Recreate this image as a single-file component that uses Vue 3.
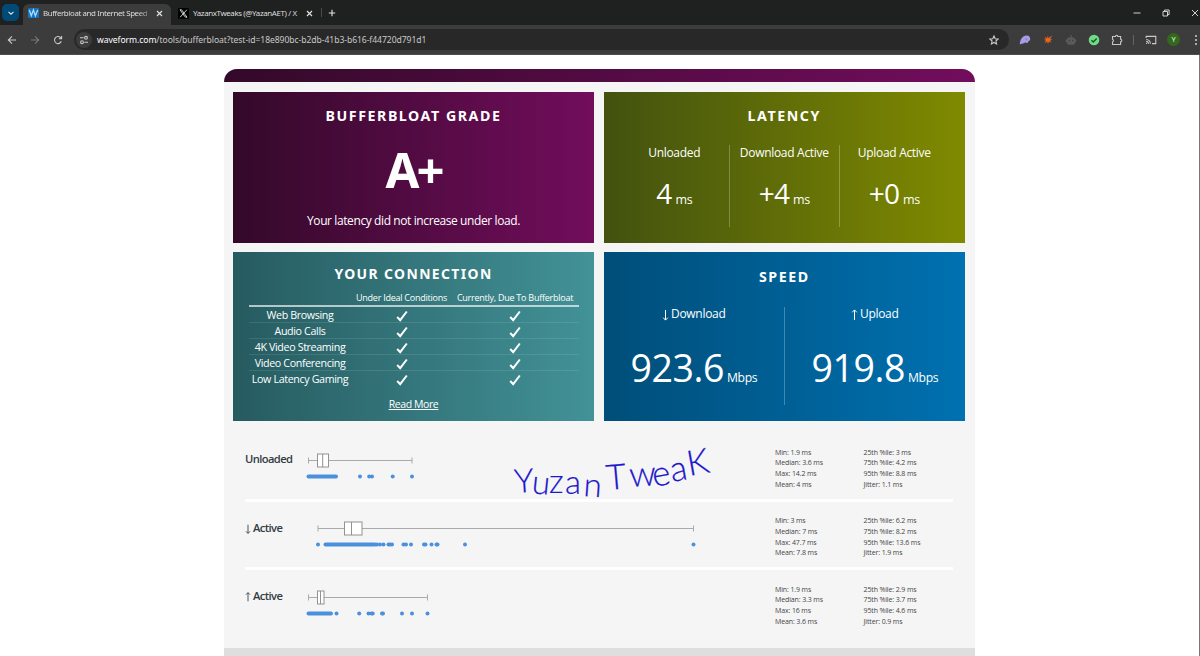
<script setup>
const tabs = [
  { title: 'Bufferbloat and Internet Speed', kind: 'wave', active: true },
  { title: 'YazanxTweaks (@YazanAET) / X', kind: 'x', active: false },
];

const latency = [
  { label: 'Unloaded', value: '4' },
  { label: 'Download Active', value: '+4' },
  { label: 'Upload Active', value: '+0' },
];

const speed = [
  { label: 'Download', dir: 'down', value: '923.6' },
  { label: 'Upload', dir: 'up', value: '919.8' },
];

const uses = ['Web Browsing', 'Audio Calls', '4K Video Streaming', 'Video Conferencing', 'Low Latency Gaming'];

// low/high are the whiskers, solid is the run where the samples overlap
const rows = [
  {
    label: 'Unloaded', dir: '',
    low: 8.5, q1: 17.5, med: 22.7, q3: 28.5, high: 112,
    solid: [8.5, 36], dots: [60, 69.2, 72, 92.7, 112],
    left: ['Min: 1.9 ms', 'Median: 3.6 ms', 'Max: 14.2 ms', 'Mean: 4 ms'],
    right: ['25th %ile: 3 ms', '75th %ile: 4.2 ms', '95th %ile: 8.8 ms', 'Jitter: 1.1 ms'],
  },
  {
    label: 'Active', dir: 'down',
    low: 18, q1: 44.5, med: 51.5, q3: 62, high: 393.5,
    solid: [25.5, 75], dots: [18, 77, 80, 83.5, 88.5, 90, 92, 103.5, 106, 111, 124, 125.5, 131.5, 136.5, 137.5, 165, 393.5],
    left: ['Min: 3 ms', 'Median: 7 ms', 'Max: 47.7 ms', 'Mean: 7.8 ms'],
    right: ['25th %ile: 6.2 ms', '75th %ile: 8.2 ms', '95th %ile: 13.6 ms', 'Jitter: 1.9 ms'],
  },
  {
    label: 'Active', dir: 'up',
    low: 8.5, q1: 17.5, med: 20.5, q3: 24, high: 127.5,
    solid: [8.5, 31], dots: [36.5, 59.2, 68.5, 71.5, 72.7, 82, 83, 102, 112, 127.5],
    left: ['Min: 1.9 ms', 'Median: 3.3 ms', 'Max: 16 ms', 'Mean: 3.6 ms'],
    right: ['25th %ile: 2.9 ms', '75th %ile: 3.7 ms', '95th %ile: 4.6 ms', 'Jitter: 0.9 ms'],
  },
];
</script>

<template>
  <div class="browser">
    <header class="tabstrip">
      <button class="tab-search">
        <svg width="8" height="8" viewBox="0 0 8 8"><path d="M1.5 2.8 4 5.2 6.5 2.8" /></svg>
      </button>
      <div v-for="tab in tabs" :key="tab.title" class="tab" :class="{ active: tab.active }">
        <svg v-if="tab.kind === 'wave'" class="favicon" width="11" height="10" viewBox="0 0 11 10">
          <rect width="11" height="10" rx="1" fill="#1673bd" />
          <path d="M1.3 2 3.3 7.8 5.4 2 7.4 7.8 9.7 2" fill="none" stroke="#a7dcff" stroke-width="1.3" />
        </svg>
        <svg v-else class="favicon" width="11" height="11" viewBox="0 0 11 11">
          <rect width="11" height="11" rx="1" fill="#000" />
          <path d="M2 1.8h1.6L9 9.2H7.4ZM8.8 1.8 2.2 9.2" fill="none" stroke="#ddd" stroke-width=".9" />
        </svg>
        <span class="tab-title">{{ tab.title }}</span>
        <svg class="close" width="7" height="7" viewBox="0 0 7 7"><path d="m1 1 5 5M6 1 1 6" /></svg>
      </div>
      <span class="tab-divider"></span>
      <svg class="plus" width="8" height="8" viewBox="0 0 8 8"><path d="M4 .8v6.4M.8 4h6.4" /></svg>
      <div class="window-buttons">
        <svg width="8" height="8" viewBox="0 0 8 8"><path d="M.5 4h7" /></svg>
        <svg width="8" height="8" viewBox="0 0 8 8"><path d="M1 2.5h4.5V7H1ZM2.5 2.3V1h4.6v4.6H5.7" /></svg>
        <svg width="8" height="8" viewBox="0 0 8 8"><path d="m1 1 6 6M7 1 1 7" /></svg>
      </div>
    </header>

    <div class="toolbar">
      <svg class="nav" width="10" height="10" viewBox="0 0 10 10"><path d="M9 5H1.5M5 1.3 1.3 5 5 8.7" /></svg>
      <svg class="nav dim" width="10" height="10" viewBox="0 0 10 10"><path d="M1 5h7.5M5 1.3 8.7 5 5 8.7" /></svg>
      <svg class="nav" width="10" height="10" viewBox="0 0 10 10"><path d="M8.3 6.3A3.5 3.5 0 1 1 7.6 2.7L8.5 3.6M8.6 1v2.8H5.8" /></svg>
      <div class="omnibox">
        <span class="site-info">
          <svg width="10" height="10" viewBox="0 0 10 10">
            <path d="M1 2.8h3.6M5.4 7.2H9" />
            <circle cx="7" cy="2.8" r="1.4" />
            <circle cx="3" cy="7.2" r="1.4" />
          </svg>
        </span>
        <span class="url"><b>waveform.com</b>/tools/bufferbloat?test-id=18e890bc-b2db-41b3-b616-f44720d791d1</span>
        <svg class="star" width="10" height="10" viewBox="0 0 10 10"><path d="m5 .9 1.2 2.8 3 .3-2.3 2 .7 3L5 7.5 2.4 9l.7-3L.8 4l3-.3Z" /></svg>
      </div>
      <div class="extensions">
        <svg width="12" height="12" viewBox="0 0 12 12">
          <path d="M.8 10.4C1 5.5 3.4 1.9 7.6 1.5c2.4-.1 3.9 1.8 3.6 4.1-.2 1.4-1.6.9-2 2.1-.4 1.4-1.7 1.6-2.9.6-.9 1.6-3.1 1-5.5 2.1Z" fill="#a99be8" />
          <path d="M6.6 4.5c0 1 1 1.4 1.8.8" fill="none" stroke="#6757ad" stroke-width=".7" />
        </svg>
        <svg width="12" height="12" viewBox="0 0 12 12">
          <path d="m6 1.2.4 3.1 4-3-2.3 3.6 2.5.9-2.5.6 1.3 2.4-2.5-1.2L6 10.6l-.7-3-2.7 1.6 1.4-2.8L1.4 6l2.5-.7-1.3-2.5 2.5 1.5Z" fill="#ed6518" />
        </svg>
        <svg width="12" height="12" viewBox="0 0 12 12">
          <path d="M5.4 1h1.2v2.4h1.6q1.8 0 1.8 2.1h1.2v2.8H10q0 2.5-2 2.5H4q-2 0-2-2.5H.8V5.5H2q0-2.1 1.8-2.1h1.6Z" fill="#5a5a5a" />
          <circle cx="4.3" cy="6.5" r=".7" fill="#3c3c3c" /><circle cx="7.7" cy="6.5" r=".7" fill="#3c3c3c" />
        </svg>
        <svg width="12" height="12" viewBox="0 0 12 12">
          <circle cx="6" cy="6" r="5.3" fill="#6fdc85" />
          <path d="m3.4 6.2 1.9 1.8 3.4-3.6" fill="none" stroke="#1d5730" stroke-width="1.5" />
        </svg>
        <svg width="12" height="12" viewBox="0 0 12 12">
          <path d="M1.5 2.5h3a1.2 1.2 0 0 1 2.4 0H9.6v2.8a1.2 1.2 0 0 1 0 2.4v2.8H1.5V8a1.5 1.5 0 0 0 0-2.8Z" fill="none" stroke="#c7c7c7" stroke-width="1.1" />
        </svg>
      </div>
      <span class="bar-divider"></span>
      <svg class="cast" width="12" height="12" viewBox="0 0 12 12">
        <path d="M1.2 4V2.4h9.6v7.2H7M1.2 5.5a4.3 4.3 0 0 1 4.2 4.2M1.2 7.4a2.4 2.4 0 0 1 2.3 2.3" />
        <circle cx="1.6" cy="9.3" r=".6" />
      </svg>
      <span class="avatar">Y</span>
      <svg class="menu" width="4" height="12" viewBox="0 0 4 12">
        <circle cx="2" cy="2" r="1" /><circle cx="2" cy="6" r="1" /><circle cx="2" cy="10" r="1" />
      </svg>
    </div>

    <main class="page">
      <div class="report">
        <div class="report-top"></div>
        <div class="cards">
          <section class="card grade">
            <h2>BUFFERBLOAT GRADE</h2>
            <strong>A+</strong>
            <p>Your latency did not increase under load.</p>
          </section>

          <section class="card latency">
            <h2>LATENCY</h2>
            <div class="metrics">
              <div v-for="m in latency" :key="m.label" class="metric">
                <span class="metric-label">{{ m.label }}</span>
                <div class="reading"><span class="num">{{ m.value }}</span><span class="unit">ms</span></div>
              </div>
            </div>
          </section>

          <section class="card connection">
            <h2>YOUR CONNECTION</h2>
            <div class="table">
              <div class="tr head">
                <span></span>
                <span class="ideal">Under Ideal Conditions</span>
                <span class="current">Currently, Due To Bufferbloat</span>
              </div>
              <div v-for="use in uses" :key="use" class="tr">
                <span class="use">{{ use }}</span>
                <span v-for="n in 2" :key="n" class="check">
                  <svg width="12" height="12" viewBox="0 0 12 12"><path d="m1.2 7 3 3.2L10.8 1.5" /></svg>
                </span>
              </div>
            </div>
            <a class="more">Read More</a>
          </section>

          <section class="card speed">
            <h2>SPEED</h2>
            <div class="metrics">
              <div v-for="m in speed" :key="m.label" class="metric">
                <span class="metric-label">
                  <svg class="arrow" :class="m.dir" width="7" height="12" viewBox="0 0 7 12"><path d="M3.5 1v10M1.2 8.7l2.3 2.4 2.3-2.4" /></svg>{{ m.label }}
                </span>
                <div class="reading"><span class="num">{{ m.value }}</span><span class="unit">Mbps</span></div>
              </div>
            </div>
          </section>
        </div>

        <div class="plots">
          <div v-for="(row, i) in rows" :key="i" class="plot-row">
            <span class="plot-label">
              <svg v-if="row.dir" class="arrow" :class="row.dir" width="6" height="12" viewBox="0 0 7 12"><path d="M3.5 1v10M1.2 8.7l2.3 2.4 2.3-2.4" /></svg>{{ row.label }}
            </span>
            <svg class="plot" width="474" height="34" viewBox="0 0 474 34">
              <path class="whisker" :d="`M${row.low} 10.5H${row.high}M${row.low} 7.5v6M${row.high} 7.5v6`" />
              <rect class="box" :x="row.q1" y="4" :width="row.q3 - row.q1" height="13" />
              <path class="whisker median" :d="`M${row.med} 4v13`" />
              <path class="run" :d="`M${row.solid[0]} 26.5H${row.solid[1]}`" />
              <circle v-for="(x, n) in row.dots" :key="n" :cx="x" cy="26.5" r="2" />
            </svg>
            <ul><li v-for="s in row.left" :key="s">{{ s }}</li></ul>
            <ul><li v-for="s in row.right" :key="s">{{ s }}</li></ul>
          </div>
          <svg class="signature" width="220" height="80" viewBox="500 430 220 80">
            <text class="small" x="515 531 549 565 583" y="493 493 493 494 496" rotate="-4 6 0 0 4">Yuzan</text>
            <text x="607 630 654 672 689" y="490 487 487 482 476" rotate="-5 -4 -10 -10 -10">TweaK</text>
          </svg>
        </div>
        <div class="report-foot"></div>
      </div>
    </main>
  </div>
</template>

<style>
body {
  background: #fff;
  overflow: hidden;
}
</style>

<style scoped>
.browser {
  width: 1200px;
  height: 656px;
  display: flex;
  flex-direction: column;
  overflow: hidden;
  font-family: "Open Sans", "Noto Sans", sans-serif;
}

svg {
  flex: none;
  display: block;
}

.tabstrip {
  height: 25px;
  flex: none;
  display: flex;
  align-items: center;
  background: #1f2020;
  font-family: "Noto Sans", sans-serif;
  font-size: 7.9px;
  color: #dedede;
}

.tabstrip path {
  fill: none;
}

.tab-search {
  width: 17px;
  height: 17px;
  margin-left: 2px;
  padding: 0;
  border: 0;
  border-radius: 5px;
  background: #004a77;
  display: grid;
  place-items: center;
}

.tab-search path,
.close path,
.plus path,
.window-buttons path {
  stroke: #e4e4e4;
  stroke-width: 1.1;
}

.tab {
  display: flex;
  align-items: center;
  box-sizing: border-box;
  width: 148px;
  height: 21px;
  margin: 4px 0 0 4px;
  padding: 0 8px 3px 5px;
}

.tab + .tab {
  width: 145px;
  margin-left: 2px;
  padding-right: 5px;
}

.tab.active {
  background: #3c3c3c;
  border-radius: 6px 6px 0 0;
}

.tab-title {
  flex: 1;
  margin-left: 4px;
  white-space: nowrap;
  letter-spacing: -0.38px;
}

.tab + .tab .tab-title {
  letter-spacing: -0.36px;
}

.tab.active .tab-title {
  mask-image: linear-gradient(90deg, #000 88%, rgba(0, 0, 0, 0.3));
}

.close {
  margin-left: 6px;
}

.tab-divider {
  width: 1px;
  height: 9px;
  margin-left: 3px;
  background: #4b4b4b;
}

.plus {
  margin-left: 6px;
}

.window-buttons {
  display: flex;
  gap: 21px;
  margin-left: auto;
  margin-right: 1px;
}

.window-buttons path {
  stroke-width: 0.9;
}

.toolbar {
  height: 30px;
  box-sizing: border-box;
  flex: none;
  display: flex;
  align-items: center;
  background: #3c3c3c;
  border-bottom: 1px solid #4e4e4e;
}

.nav {
  margin-left: 7px;
  margin-right: 6px;
}

.nav path,
.star path,
.cast path,
.site-info svg {
  fill: none;
  stroke: #c9c9c9;
  stroke-width: 1.1;
}

.nav.dim path {
  stroke: #777;
}

.omnibox {
  width: 935px;
  height: 21px;
  margin-left: 5px;
  border-radius: 11px;
  background: #282828;
  display: flex;
  align-items: center;
}

.site-info {
  width: 16px;
  height: 16px;
  margin-left: 2px;
  border-radius: 50%;
  background: #3c3c3c;
  display: grid;
  place-items: center;
}

.url {
  flex: 1;
  margin-left: 5px;
  font-family: "Noto Sans", sans-serif;
  font-size: 8.6px;
  letter-spacing: -0.07px;
  color: #c9c9c9;
}

.url b {
  font-weight: 400;
  color: #fff;
}

.star {
  margin-right: 10px;
}

.extensions {
  display: flex;
  gap: 11px;
  margin-left: 10px;
}

.bar-divider {
  width: 1px;
  height: 10px;
  margin-left: 10px;
  background: #656565;
}

.cast {
  margin-left: 11px;
}

.cast circle {
  fill: #c9c9c9;
}

.avatar {
  width: 13px;
  height: 13px;
  margin-left: 10px;
  border-radius: 50%;
  background: #33691e;
  color: #e4eedf;
  font: 7px/14px Roboto, sans-serif;
  text-align: center;
}

.menu {
  margin-left: 14px;
  fill: #d0d0d0;
}

.page {
  flex: 1;
  display: flex;
  justify-content: center;
  padding-top: 14px;
  padding-right: 1px;
  border-right: 1px solid #777;
  background: #fff;
}

.report {
  width: 751px;
  display: flex;
  flex-direction: column;
  background: #f5f5f5;
  border-radius: 13px 13px 0 0;
}

.report-top {
  height: 13px;
  border-radius: 13px 13px 0 0;
  background: linear-gradient(90deg, #330929, #720d5c);
}

.cards {
  display: grid;
  grid-template-columns: 361px 361.5px;
  grid-template-rows: 151px 169px;
  column-gap: 9.5px;
  row-gap: 9.5px;
  padding: 9.5px 9.5px 0;
}

.card {
  display: flex;
  flex-direction: column;
  align-items: center;
  color: #fff;
}

h2,
p,
ul {
  margin: 0;
  padding: 0;
}

h2 {
  font: 700 14.2px/20px "Noto Sans", sans-serif;
  letter-spacing: 1.55px;
}

.grade {
  background: linear-gradient(90deg, #330929, #720d5c);
}

.latency {
  background: linear-gradient(90deg, #42520f, #808a00);
}

.connection {
  background: linear-gradient(90deg, #265b60, #429297);
}

.speed {
  background: linear-gradient(90deg, #004e79, #0071b1);
}

.grade h2,
.latency h2 {
  margin-top: 14px;
}

.grade strong {
  margin-top: 18px;
  font: 700 49px/50px "Noto Sans", sans-serif;
  letter-spacing: -3px;
}

.grade p {
  margin-top: 17.5px;
  font-size: 12px;
  line-height: 20px;
  letter-spacing: -0.4px;
  white-space: nowrap;
}

.metrics {
  display: flex;
}

.metric {
  display: flex;
  flex-direction: column;
  align-items: center;
}

.metric + .metric {
  border-left: 1px solid rgba(255, 255, 255, 0.25);
}

.metric-label {
  display: flex;
  font-size: 12px;
  line-height: 16px;
  letter-spacing: -0.3px;
  white-space: nowrap;
}

.reading {
  display: flex;
  align-items: baseline;
}

.unit {
  font-size: 12.5px;
  letter-spacing: -0.4px;
  margin-left: 4px;
}

.latency .metrics {
  height: 82px;
  margin-top: 19px;
}

.latency .metric {
  width: 109px;
}

.latency .reading {
  margin-top: 14px;
  line-height: 36px;
}

.latency .num {
  font-size: 28px;
  letter-spacing: -0.8px;
}

.connection h2 {
  margin-top: 12px;
  font-size: 13.9px;
  letter-spacing: 1.4px;
}

.table {
  width: 330px;
  margin-top: 5px;
}

.tr {
  display: grid;
  grid-template-columns: 103px 100px 127px;
  height: 15px;
  align-items: center;
  justify-items: center;
  font-size: 10.7px;
  line-height: 15px;
  letter-spacing: -0.36px;
  white-space: nowrap;
  border-bottom: 1px solid rgba(255, 255, 255, 0.1);
}

.tr:last-child {
  border: 0;
}

.tr.head {
  height: 16px;
  font-size: 9px;
  letter-spacing: -0.25px;
  border-bottom: 2px solid rgba(255, 255, 255, 0.65);
}

.use {
  height: 15px;
  line-height: 17px;
}

.check svg {
  margin-top: 2px;
}

.check path {
  fill: none;
  stroke: #fff;
  stroke-width: 2;
}

.more {
  margin-top: 11px;
  font-size: 10.5px;
  line-height: 15px;
  letter-spacing: -0.4px;
  text-decoration: underline;
}

.speed h2 {
  margin-top: 15px;
}

.speed .metrics {
  height: 98px;
  margin-top: 20px;
}

.speed .metric {
  width: 180px;
}

.speed .metric-label {
  margin-top: -1px;
}

.arrow {
  margin: 3px 2px 0 0;
  fill: none;
  stroke: currentColor;
  stroke-width: 1;
}

.arrow.up {
  transform: scaleY(-1);
}

.speed .reading {
  margin-top: 21px;
  line-height: 50px;
}

.speed .num {
  font-size: 37.5px;
  letter-spacing: -0.4px;
}

.speed .unit {
  margin-left: 3px;
  font-size: 12.2px;
}

.plots {
  position: relative;
  margin: 12px 21.5px 0;
}

.plot-row {
  display: grid;
  grid-template-columns: 55px 475px 88.5px 1fr;
  height: 65.5px;
  border-bottom: 3px solid #fff;
}

.plot-row:nth-child(3) {
  border-color: transparent;
}

.plot-label {
  display: flex;
  margin-top: 18.4px;
  font-size: 11.2px;
  font-weight: 600;
  line-height: 16px;
  letter-spacing: -0.6px;
  color: #333b43;
  white-space: nowrap;
}

.plot {
  margin-top: 16.6px;
}

.whisker,
.box {
  fill: none;
  stroke: #aaa;
  stroke-width: 1;
}

.box {
  fill: #fff;
  stroke: #929292;
}

.median {
  stroke: #929292;
}

.run {
  stroke: #4a90dd;
  stroke-width: 4;
  stroke-linecap: round;
}

.plot circle {
  fill: #4a90dd;
}

li {
  list-style: none;
  font-size: 7px;
  line-height: 10.8px;
  letter-spacing: -0.12px;
  color: #454545;
}

ul {
  margin-top: 14.5px;
}

/* handwritten note over the charts, each letter has its own tilt */
.signature {
  position: absolute;
  left: 255px;
  top: -3px;
}

.signature text {
  font-family: Lato, sans-serif;
  font-size: 35px;
  font-weight: 300;
  fill: #1e18cc;
  stroke: #1e18cc;
  stroke-width: 0.2;
}

.signature .small {
  font-size: 33px;
}

.report-foot {
  flex: 1;
  margin-top: 9px;
  background: #dedede;
}
</style>
